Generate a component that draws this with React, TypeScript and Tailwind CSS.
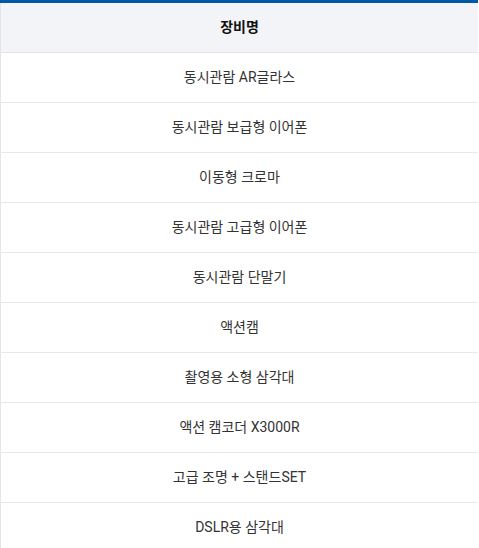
const items = [
  '동시관람 AR글라스',
  '동시관람 보급형 이어폰',
  '이동형 크로마',
  '동시관람 고급형 이어폰',
  '동시관람 단말기',
  '액션캠',
  '촬영용 소형 삼각대',
  '액션 캠코더 X3000R',
  '고급 조명 + 스탠드SET',
  'DSLR용 삼각대',
];

export default function App() {
  return (
    <div
      className="w-[479px] bg-white"
      style={{ fontFamily: 'Roboto, "Noto Sans CJK KR", sans-serif' }}
    >
      <div className="w-[478px] border-t-[3px] border-[#0059a8]">
        <table className="w-full border-collapse border-l border-[#e5e5e5] text-[14px]">
          <thead>
            <tr className="h-[49px] bg-[#f3f4f7] border-b border-[#e5e5e5]">
              <th className="font-bold text-[#111] text-center">장비명</th>
            </tr>
          </thead>
          <tbody>
            {items.map((name) => (
              <tr key={name} className="h-[50px] border-b border-[#e8e8e8]">
                <td className="text-center text-[#333]">{name}</td>
              </tr>
            ))}
          </tbody>
        </table>
      </div>
    </div>
  );
}
